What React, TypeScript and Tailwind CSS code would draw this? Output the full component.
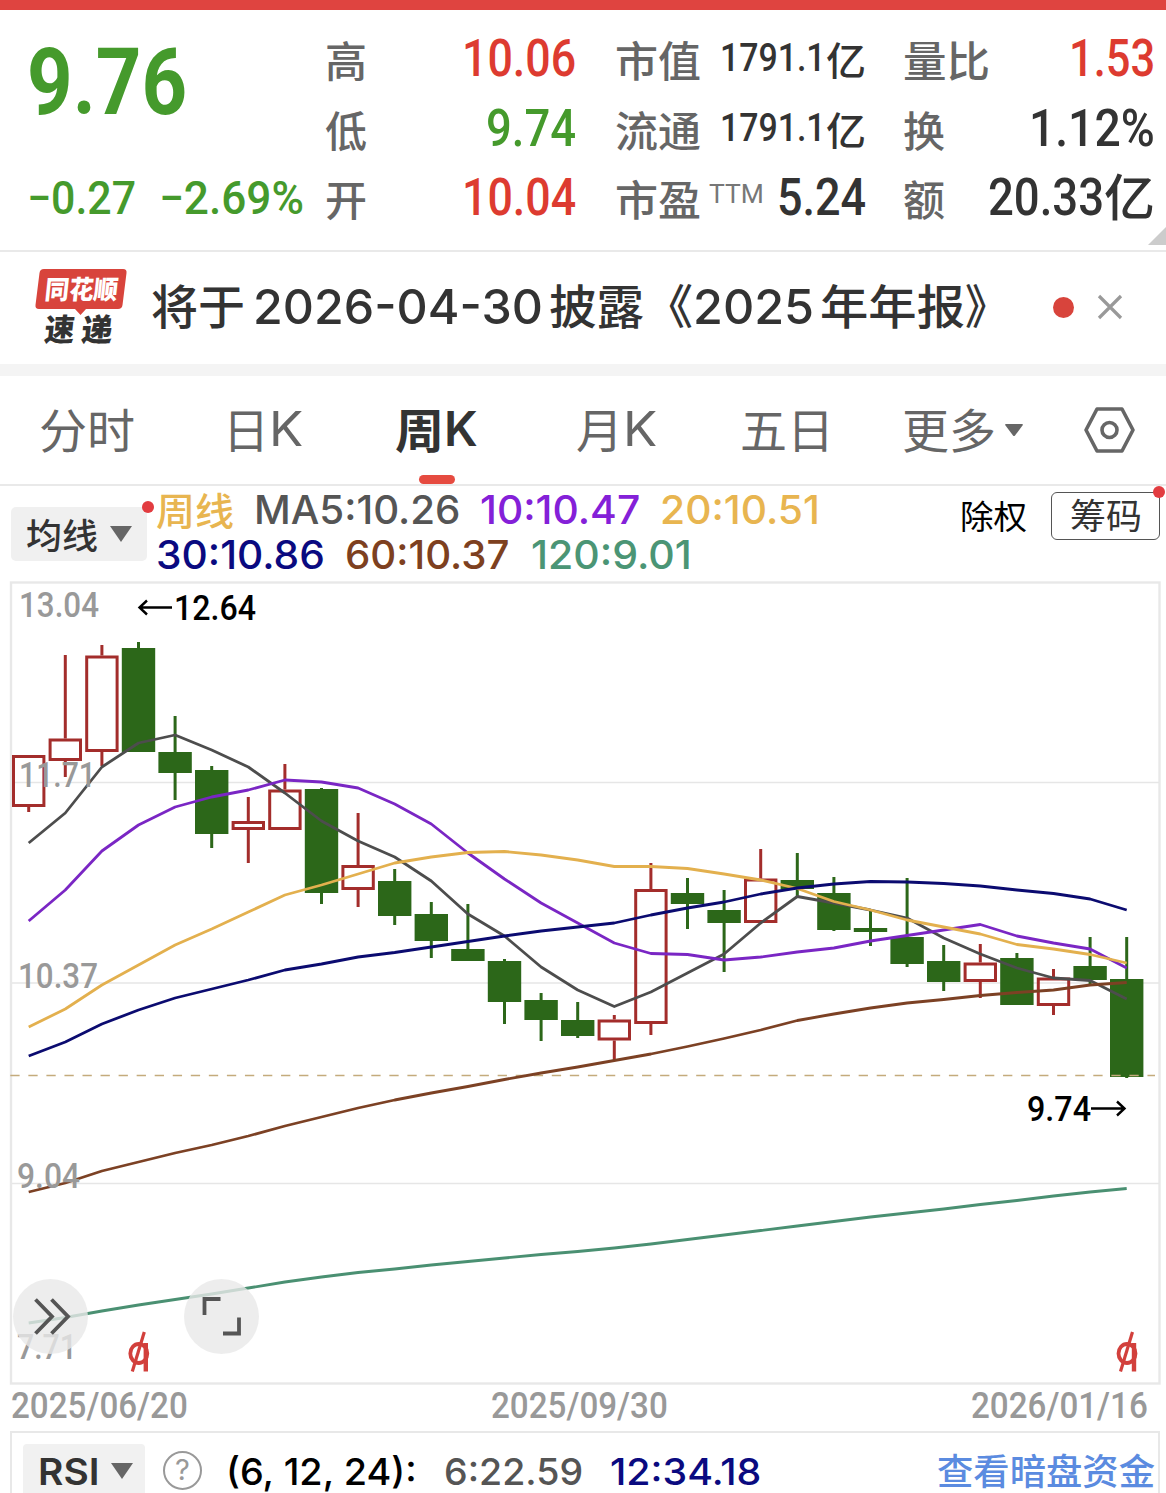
import { useLayoutEffect, useRef, useState, type ReactNode } from "react";

const DIN = "font-[Roboto,sans-serif]";
const CJK = "font-['Noto_Sans_CJK_SC',sans-serif]";
const SANS = "font-[Inter,sans-serif]";

// stretches or condenses its text to the width of the box
function Fit({ className = "", children }: { className?: string; children: ReactNode }) {
  const box = useRef<HTMLDivElement>(null);
  const text = useRef<HTMLSpanElement>(null);
  const [scale, setScale] = useState(1);

  useLayoutEffect(() => {
    if (box.current && text.current) {
      setScale(box.current.offsetWidth / text.current.offsetWidth);
    }
  }, []);

  return (
    <div ref={box} className={`shrink-0 whitespace-nowrap ${className}`}>
      <span ref={text} className="inline-block origin-left" style={{ transform: `scaleX(${scale})` }}>
        {children}
      </span>
    </div>
  );
}

function Stat({ label, children }: { label: ReactNode; children: ReactNode }) {
  return (
    <div className="flex h-[69.5px] items-center justify-between">
      <div className={`flex text-[42px] leading-[69px] font-medium text-[#666] ${CJK}`}>{label}</div>
      <div className="flex items-center">{children}</div>
    </div>
  );
}

function Quote() {
  const num = `text-[51px] leading-[69px] font-medium ${DIN}`;
  const small = `text-[38px] leading-[69px] font-medium text-[#333] ${DIN}`;
  return (
    <section className="relative flex h-[242px] border-b-2 border-[#e9e9e9] pt-[14px]">
      <div className="w-[325px] shrink-0 pl-[27px] text-[#459a2c]">
        <Fit className={`mt-[9px] h-[100px] w-[160px] text-[92px] leading-[100px] font-bold ${DIN}`}>9.76</Fit>
        <div className={`mt-[30px] flex text-[46px] leading-[70px] font-medium ${DIN}`}>
          <Fit className="w-[109px]">−0.27</Fit>
          <Fit className="ml-[23px] w-[145px]">−2.69%</Fit>
        </div>
      </div>

      <div className="w-[251px] shrink-0">
        <Stat label="高">
          <Fit className={`w-[114px] text-[#dd3b30] ${num}`}>10.06</Fit>
        </Stat>
        <Stat label="低">
          <Fit className={`w-[90px] text-[#459a2c] ${num}`}>9.74</Fit>
        </Stat>
        <Stat label="开">
          <Fit className={`w-[114px] text-[#dd3b30] ${num}`}>10.04</Fit>
        </Stat>
      </div>

      <div className="ml-[39px] w-[251px] shrink-0">
        {["市值", "流通"].map((label) => (
          <Stat key={label} label={<Fit className="w-[86px]">{label}</Fit>}>
            <Fit className={`w-[106px] ${small}`}>1791.1</Fit>
            <Fit className={`w-[40px] text-[39px] leading-[65px] font-medium text-[#333] ${CJK}`}>亿</Fit>
          </Stat>
        ))}
        <Stat
          label={
            <>
              <Fit className="w-[86px]">市盈</Fit>
              <Fit className="ml-[8px] w-[55px] text-[25px] leading-[64px] font-normal text-[#777] font-[Roboto,sans-serif]">
                TTM
              </Fit>
            </>
          }
        >
          <Fit className={`w-[89px] text-[#333] ${num}`}>5.24</Fit>
        </Stat>
      </div>

      <div className="ml-[37px] w-[252px] shrink-0">
        <Stat label={<Fit className="w-[87px]">量比</Fit>}>
          <Fit className={`w-[86px] text-[#dd3b30] ${num}`}>1.53</Fit>
        </Stat>
        <Stat label="换">
          <Fit className={`w-[126px] text-[#333] ${num}`}>1.12%</Fit>
        </Stat>
        <Stat label="额">
          <Fit className={`w-[116px] text-[#333] ${num}`}>20.33</Fit>
          <Fit className={`h-[69px] w-[51px] text-[50px] leading-[62px] font-medium text-[#333] ${CJK}`}>亿</Fit>
        </Stat>
      </div>

      <svg className="absolute right-0 bottom-[5px]" width="18" height="18">
        <path d="M18 0V18H0Z" fill="#ccc" />
      </svg>
    </section>
  );
}

function News() {
  const cjk = `text-[47px] leading-[64px] ${CJK}`;
  const num = `text-[48.500px] leading-[69px] ${SANS}`;
  return (
    <section className="flex h-[124px] items-center border-b-[12px] border-[#f4f4f4] text-[#333]">
      <div className="relative ml-[35px] h-[80px] w-[92px] shrink-0">
        <svg className="absolute inset-0 -mt-px" width="92" height="80">
          <path d="M9 2H88Q92 2 91.500 6L87.500 38Q87 42 83 42H51L45.500 48L40 42H4Q0 42 .5 38L4.500 6Q5 2 9 2Z" fill="#d8443c" />
        </svg>
        <div className={`relative ml-[10px] h-[44px] -skew-x-6 text-[26px] leading-[40px] font-black text-white ${CJK}`}>
          <Fit className="w-[73px]">同花顺</Fit>
        </div>
        <div className={`relative ml-[10px] flex -skew-x-6 gap-[7px] text-[31px] leading-[31px] font-black text-[#333] ${CJK}`}>
          <Fit className="w-[30px]">速</Fit>
          <Fit className="w-[31px]">递</Fit>
        </div>
      </div>
      <div className="ml-[24px] flex h-[72px] font-medium">
        <Fit className={`w-[94px] ${cjk}`}>将于</Fit>
        <Fit className={`ml-[8px] w-[290px] ${num}`}>2026-04-30</Fit>
        <Fit className={`ml-[6px] w-[95px] ${cjk}`}>披露</Fit>
        <Fit className={`w-[49px] ${cjk}`}>《</Fit>
        <Fit className={`w-[121px] ${num}`}>2025</Fit>
        <Fit className={`ml-[6px] w-[145px] ${cjk}`}>年年报</Fit>
        <Fit className={`w-[43px] ${cjk}`}>》</Fit>
      </div>
      <span className="-mt-[2px] ml-[45px] size-[21px] shrink-0 rounded-full bg-[#d8443c]" />
      <svg className="-mt-[2px] ml-[23px] shrink-0" width="26" height="26" fill="none" stroke="#999" strokeWidth="3.200">
        <path d="M2 2L24 24M24 2L2 24" />
      </svg>
    </section>
  );
}

function Tabs() {
  return (
    <nav className={`flex h-[110px] border-b-2 border-[#e9e9e9] pl-[39px] text-[47px] leading-[104px] text-[#666] ${CJK}`}>
      <Fit className="w-[96px]">分时</Fit>
      <Fit className="ml-[88px] w-[46px]">日</Fit>
      <Fit className="w-[34px] pt-px font-[Inter,sans-serif] text-[48px]">K</Fit>
      <div className="relative ml-[92px] flex font-bold text-[#333]">
        <Fit className="w-[49px]">周</Fit>
        <Fit className="w-[34px] pt-px font-[Inter,sans-serif] text-[48px] font-semibold">K</Fit>
        <span className="absolute top-[99px] left-[24px] h-[9px] w-[36px] rounded-full bg-[#e64b40]" />
      </div>
      <Fit className="ml-[98px] w-[47px]">月</Fit>
      <Fit className="w-[34px] pt-px font-[Inter,sans-serif] text-[48px]">K</Fit>
      <Fit className="ml-[83px] w-[94px]">五日</Fit>
      <Fit className="ml-[68px] w-[94px]">更多</Fit>
      <svg className="mt-[47px] ml-[8px] shrink-0" width="20" height="14">
        <path d="M2 1H18Q19.500 1 18.500 2.500L11 12.500Q10 13.500 9 12.500L1.500 2.500Q.5 1 2 1Z" fill="#666" />
      </svg>
      <svg className="mt-[28px] ml-[58px] shrink-0" width="54" height="52" fill="none" stroke="#666" strokeWidth="3.600" strokeLinejoin="round">
        <path d="M15 5H40L51 26L40 47H15L4 26Z" />
        <circle cx="27.500" cy="26" r="7.500" />
      </svg>
    </nav>
  );
}

function Legend() {
  return (
    <section className="relative flex h-[95px] bg-white">
      <div className={`mt-[21px] ml-[11px] flex h-[54px] w-[136px] shrink-0 items-center rounded-[5px] bg-[#f0f0f0] pl-[15px] text-[35px] leading-[50px] font-medium text-[#333] ${CJK}`}>
        <Fit className="w-[72px]">均线</Fit>
        <svg className="ml-[12px]" width="22" height="16">
          <path d="M0 0H22L11 16Z" fill="#666" />
        </svg>
      </div>
      <span className="absolute top-[15px] left-[142px] size-3 rounded-full bg-[#e23c40]" />
      <div className={`ml-[9px] pt-[2px] text-[39.500px] leading-[45px] font-medium ${SANS}`}>
        <div className="flex h-[45px]">
          <Fit className={`h-[42px] w-[78px] text-[38px] leading-[41px] text-[#e8b550] ${CJK}`}>周线</Fit>
          <Fit className="ml-[20px] w-[206px] text-[#555]">MA5:10.26</Fit>
          <Fit className="ml-[20px] w-[160px] text-[#8420d8]">10:10.47</Fit>
          <Fit className="ml-[20px] w-[160px] text-[#e8b550]">20:10.51</Fit>
        </div>
        <div className="flex">
          <Fit className="w-[169px] text-[#0a0a80]">30:10.86</Fit>
          <Fit className="ml-[20px] w-[165px] text-[#7d4020]">60:10.37</Fit>
          <Fit className="ml-[21px] w-[161px] text-[#4b9575]">120:9.01</Fit>
        </div>
      </div>
      <Fit className={`absolute top-[4px] left-[960px] w-[67px] text-[33px] leading-[50px] text-black ${CJK}`}>除权</Fit>
      <div className={`absolute top-[6px] left-[1051px] h-[48px] w-[109px] rounded-[6px] border-[1.5px] border-[#555] pl-[18px] text-[35px] leading-[41px] text-[#333] ${CJK}`}>
        <Fit className="w-[72px]">筹码</Fit>
      </div>
      <span className="absolute top-0 left-[1153px] size-3 rounded-full bg-[#e23c40]" />
    </section>
  );
}

// [open/close top, open/close bottom, high, low, rising] in chart pixels
const candles: [number, number, number, number, boolean][] = [
  [755, 807, 755, 812, true],
  [738.5, 761, 655, 777, true],
  [655.5, 752, 645, 766, true],
  [648, 752, 642, 752, false],
  [752, 773, 716, 800, false],
  [770, 834, 766, 848, false],
  [821, 830, 797, 863, true],
  [789.5, 830, 764, 830, true],
  [789, 893, 788, 904, false],
  [865, 890, 813, 907, true],
  [881, 916, 869, 925, false],
  [914, 941, 902, 958, false],
  [949, 961, 904, 961, false],
  [961, 1002, 959, 1024, false],
  [1000, 1020, 993, 1041, false],
  [1020, 1036, 1002, 1038, false],
  [1019.5, 1040.5, 1015, 1060, true],
  [889, 1024, 863, 1035, true],
  [893, 904, 878, 929, false],
  [910, 923, 890, 972, false],
  [878.5, 923, 849, 923, true],
  [880, 889, 853, 897, false],
  [893, 930, 877, 931, false],
  [928, 932, 910, 946, false],
  [937, 964, 878, 967, false],
  [961, 982, 945, 991, false],
  [962.5, 982, 944, 998, true],
  [958, 1005, 953, 1005, false],
  [977.5, 1006, 969, 1015, true],
  [966, 980, 937, 985, false],
  [979, 1077, 937, 1078, false],
];

const averages = [
  { color: "#4d4d4d", y: [843, 813, 767, 743, 735, 750, 767, 793, 821, 841, 857, 881, 914, 936, 967, 990, 1006.5, 992, 973, 954, 923, 896.5, 903, 910, 918, 938, 954, 968, 978, 980.5, 999] },
  { color: "#7a26c4", y: [921, 890, 851, 825, 807, 797, 790, 780, 782, 788, 804, 824, 853, 879, 903, 923, 943, 953.5, 954.5, 960, 957, 952, 948, 941, 935.5, 930, 924.5, 936, 943, 949, 968] },
  { color: "#e3b04e", y: [1027, 1009, 985, 965, 945, 929, 912, 895, 885, 874, 863, 857, 852.5, 851.5, 855, 860, 866.5, 866.5, 868.5, 874, 880, 888.5, 901.5, 910, 920, 927, 934, 944.5, 949, 954.5, 963] },
  { color: "#0b0b70", y: [1056, 1042, 1024, 1010, 998, 989, 980, 970, 964, 957, 952.5, 947, 941.5, 936, 931, 927, 923, 915, 908, 902, 894, 888, 884, 881.5, 882, 883.5, 886, 890, 893.5, 899, 910] },
  { color: "#7c4124", y: [1192, 1183, 1171, 1162, 1153, 1145, 1136, 1126, 1117, 1108, 1100, 1093, 1086.5, 1079.5, 1073, 1067, 1060.5, 1054, 1046.5, 1038.5, 1030, 1020.5, 1014, 1008, 1003, 999.5, 995.5, 992.5, 990, 985, 982.5] },
  { color: "#4a9072", y: [1323, 1317.5, 1311, 1305, 1299.5, 1294, 1288, 1282, 1277, 1272.5, 1269, 1265, 1261.5, 1258, 1254.5, 1251.5, 1248, 1244, 1239.5, 1235, 1230.5, 1226, 1221.5, 1217, 1213, 1209, 1204.5, 1200.5, 1196, 1192, 1188.5] },
];

const scaleLabels = [
  { text: "13.04", x: 19, y: 617, w: 80 },
  { text: "11.71", x: 19, y: 787, w: 77 },
  { text: "10.37", x: 18, y: 988, w: 80 },
  { text: "9.04", x: 17, y: 1188, w: 63 },
  { text: "7.71", x: 17, y: 1359, w: 60 },
];

const cx = (i: number) => 28.7 + i * 36.6;

function Dividend({ x }: { x: number }) {
  return (
    <g fill="none" stroke="#d2403c">
      <ellipse cx={x - 7.5} cy="1353.500" rx="8.500" ry="9.500" strokeWidth="3.800" />
      <path d={`M${x - 0.5} 1343V1371.500`} strokeWidth="4.400" />
      <path d={`M${x - 2} 1332L${x - 14} 1371.500`} strokeWidth="3.200" />
    </g>
  );
}

function Chart() {
  return (
    <svg className="block" width="1166" height="806" viewBox="0 581 1166 806" fill="none">
      <rect x="11" y="582.500" width="1148.500" height="801" stroke="#e8e8e8" strokeWidth="2.400" />
      <path d="M12 782.500H1159M12 983H1159M12 1183.500H1159" stroke="#e6e6e6" strokeWidth="1.400" />

      {candles.map(([top, bottom, high, low, up], i) => {
        const color = up ? "#a32d2b" : "#2c6719";
        return (
          <g key={i} stroke={color} strokeWidth="3">
            <path d={`M${cx(i)} ${high}V${top}M${cx(i)} ${bottom}V${low}`} />
            {up ? (
              <rect x={cx(i) - 15.2} y={top + 1.5} width="30.400" height={bottom - top - 3} />
            ) : (
              <rect x={cx(i) - 16.7} y={top} width="33.400" height={bottom - top} fill={color} stroke="none" />
            )}
          </g>
        );
      })}
      <path d="M10.300 1075.500H1155" stroke="#c4ab7c" strokeWidth="1.500" strokeDasharray="9.300 8.750" />

      {averages.map(({ color, y }) => (
        <polyline
          key={color}
          points={y.map((v, i) => `${cx(i)},${v}`).join(" ")}
          stroke={color}
          strokeWidth="2.800"
          strokeLinejoin="round"
        />
      ))}

      <g className="font-[Roboto,sans-serif] text-[35px] font-medium">
        {scaleLabels.map(({ text, x, y, w }) => (
          <text key={text} x={x} y={y} textLength={w} lengthAdjust="spacingAndGlyphs" fill="#999">
            {text}
          </text>
        ))}
        <text x="174" y="620" textLength="82" lengthAdjust="spacingAndGlyphs" fill="#000">
          12.64
        </text>
        <text x="1027" y="1121" textLength="64" lengthAdjust="spacingAndGlyphs" fill="#000">
          9.74
        </text>
      </g>
      <g stroke="#000" strokeWidth="2.400">
        <path d="M172 607.500H139.500M147 600.500L139.500 607.500L147 614.500" />
        <path d="M1091 1108.500H1124.500M1117 1101.500L1124.500 1108.500L1117 1115.500" />
      </g>

      <Dividend x={146.3} />
      <Dividend x={1134.5} />

      <circle cx="50.500" cy="1316.500" r="37.500" fill="#e9e9e9" fillOpacity=".8" />
      <circle cx="221.500" cy="1316.500" r="37.500" fill="#e9e9e9" fillOpacity=".8" />
      <g stroke="#555" strokeWidth="3.800">
        <path d="M35.500 1299.500L52 1316.500L35.500 1333.500M51.500 1299.500L68 1316.500L51.500 1333.500" />
        <path d="M220.500 1299H204.500V1315M223 1333.500H239V1317.500" />
      </g>
    </svg>
  );
}

export default function App() {
  return (
    <main className="h-[1493px] w-[1166px] overflow-hidden bg-white">
      <div className="h-[10px] bg-[#df4440]" />
      <Quote />
      <News />
      <Tabs />
      <Legend />
      <Chart />

      <div className={`flex h-[44px] justify-between pr-[18px] pl-[11px] text-[36px] leading-[39px] font-medium text-[#999] ${DIN}`}>
        <Fit className="w-[177px]">2025/06/20</Fit>
        <Fit className="w-[177px]">2025/09/30</Fit>
        <Fit className="w-[177px]">2026/01/16</Fit>
      </div>

      <section className={`ml-[10px] flex h-[62px] w-[1150px] border-2 border-b-0 border-[#e8e8e8] text-[37px] leading-[56px] font-medium ${SANS}`}>
        <div className="mt-[11px] ml-[11px] flex w-[122px] shrink-0 rounded-t-[4px] bg-[#f1f1f1] pl-[15px] leading-[55px] text-[#333]">
          <Fit className="h-[49px] w-[61px] font-semibold">RSI</Fit>
          <svg className="mt-[19px] ml-[12px]" width="22" height="16">
            <path d="M0 0H22L11 16Z" fill="#666" />
          </svg>
        </div>
        <div className="mt-[18px] ml-[18px] size-[39px] shrink-0 rounded-full border-[2.500px] border-[#999] text-center text-[29px] leading-[34px] font-normal text-[#999]">
          ?
        </div>
        <Fit className="mt-[11px] ml-[24px] h-[49px] w-[191px] text-black">(6, 12, 24):</Fit>
        <Fit className="mt-[11px] ml-[27px] h-[49px] w-[139px] text-[#555]">6:22.59</Fit>
        <Fit className="mt-[11px] ml-[27px] h-[49px] w-[151px] text-[#0a0a80]">12:34.18</Fit>
        <Fit className={`mt-[15px] ml-[176px] h-[45px] w-[218px] text-[36px] leading-[43px] text-[#5b8be0] ${CJK}`}>查看暗盘资金</Fit>
      </section>
    </main>
  );
}
